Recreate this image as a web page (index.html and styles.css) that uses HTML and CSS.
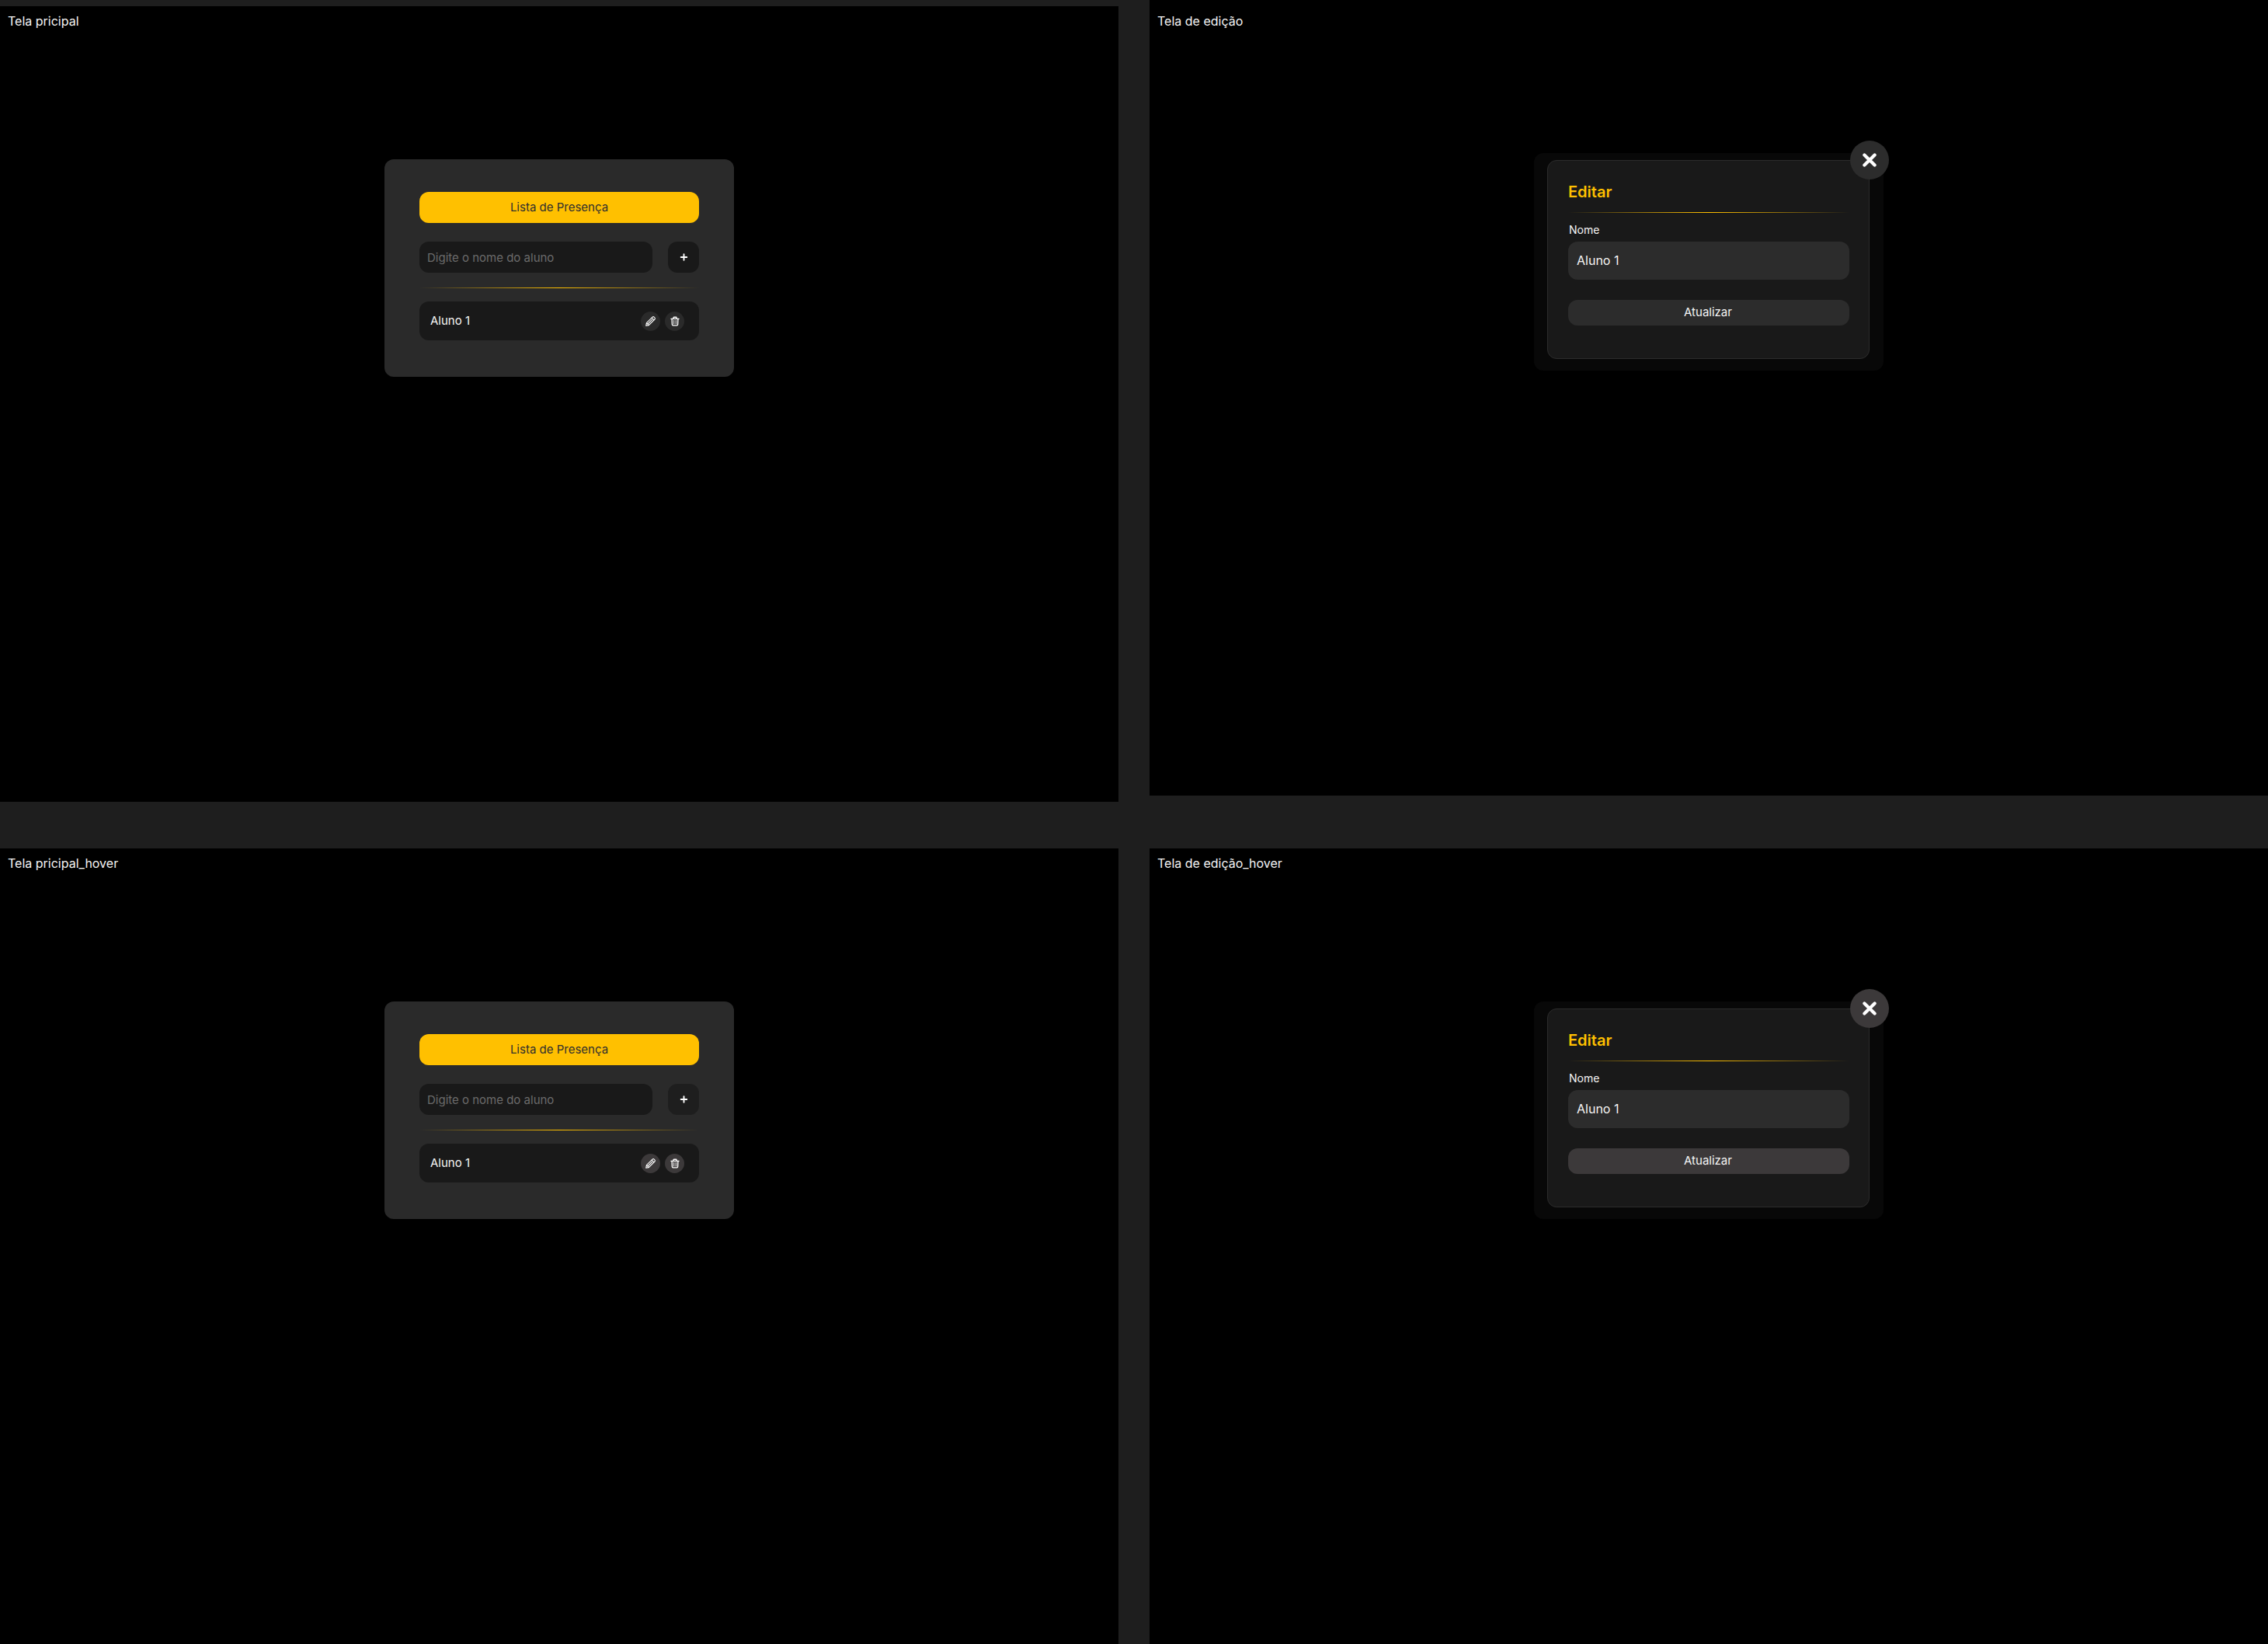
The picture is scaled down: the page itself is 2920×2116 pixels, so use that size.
FILE: index.html
```html
<!DOCTYPE html>
<html lang="pt-BR">
<head>
  <meta charset="utf-8">
  <meta name="viewport" content="width=device-width, initial-scale=1">
  <title>Lista de Presença</title>
  <link rel="stylesheet" href="styles.css">
</head>
<body>
  <svg class="sprite" aria-hidden="true">
    <symbol id="plus" viewBox="0 0 10 10"><path d="M5.5 1.2v7.6M1.7 5h7.6" fill="none" stroke="currentColor" stroke-width="1.9" stroke-linecap="round"/></symbol>
    <symbol id="pencil" viewBox="0 0 13 13"><path d="M.7 12.3l.7-3.6 7.6-7.6a1.5 1.5 0 0 1 2.2 0l.7.7a1.5 1.5 0 0 1 0 2.2l-7.6 7.6zM8.2 2.1l2.7 2.7M3 10l5.8-5.8M1.6 8.9l2.5 2.5" fill="none" stroke="currentColor" stroke-width="1.1" stroke-linejoin="round"/></symbol>
    <symbol id="trash" viewBox="0 0 13 13"><path d="M2 3.4h10M5 3V1.9q0-.6.6-.6h2.8q.6 0 .6.6V3M3.1 3.6l.3 7.2q.1 1.1 1 1.1h5.2q.9 0 1-1.1l.3-7.2" fill="none" stroke="currentColor" stroke-width="1.4" stroke-linecap="round"/><path d="M5.7 4.8v5.6M8.3 4.8v5.6" fill="none" stroke="currentColor" stroke-width="1"/></symbol>
    <symbol id="close" viewBox="0 0 18 18"><path d="M2.4 2.4l13.2 13.2M15.6 2.4L2.4 15.6" fill="none" stroke="currentColor" stroke-width="4.2" stroke-linecap="round"/></symbol>
  </svg>

  <main class="board">
    <div class="column column-main">
      <section class="screen">
        <header class="screen-header"><h2 class="screen-name">Tela pricipal</h2></header>
        <div class="card">
          <h1 class="card-title">Lista de Presença</h1>
          <form class="add-form">
            <input class="add-input" type="text" placeholder="Digite o nome do aluno" aria-label="Nome do aluno">
            <button class="add-button" type="button" aria-label="Adicionar"><svg class="icon-plus"><use href="#plus"/></svg></button>
          </form>
          <hr class="divider">
          <ul class="students">
            <li class="student">
              <span class="student-name">Aluno 1</span>
              <button class="round-button" type="button" aria-label="Editar"><svg class="icon"><use href="#pencil"/></svg></button>
              <button class="round-button" type="button" aria-label="Excluir"><svg class="icon"><use href="#trash"/></svg></button>
            </li>
          </ul>
        </div>
      </section>

      <section class="screen screen-hover">
        <header class="screen-header"><h2 class="screen-name">Tela pricipal_hover</h2></header>
        <div class="card">
          <h1 class="card-title">Lista de Presença</h1>
          <form class="add-form">
            <input class="add-input" type="text" placeholder="Digite o nome do aluno" aria-label="Nome do aluno">
            <button class="add-button" type="button" aria-label="Adicionar"><svg class="icon-plus"><use href="#plus"/></svg></button>
          </form>
          <hr class="divider">
          <ul class="students">
            <li class="student">
              <span class="student-name">Aluno 1</span>
              <button class="round-button" type="button" aria-label="Editar"><svg class="icon"><use href="#pencil"/></svg></button>
              <button class="round-button" type="button" aria-label="Excluir"><svg class="icon"><use href="#trash"/></svg></button>
            </li>
          </ul>
        </div>
      </section>
    </div>

    <div class="column column-edit">
      <section class="screen">
        <header class="screen-header screen-header-low"><h2 class="screen-name">Tela de edição</h2></header>
        <div class="backdrop">
          <form class="modal">
            <button class="close-button" type="button" aria-label="Fechar"><svg class="icon-close"><use href="#close"/></svg></button>
            <h1 class="modal-title">Editar</h1>
            <hr class="modal-divider">
            <label class="modal-label" for="nome">Nome</label>
            <input class="modal-input" id="nome" type="text" value="Aluno 1">
            <button class="update-button" type="button">Atualizar</button>
          </form>
        </div>
      </section>

      <section class="screen screen-hover">
        <header class="screen-header"><h2 class="screen-name">Tela de edição_hover</h2></header>
        <div class="backdrop">
          <form class="modal">
            <button class="close-button" type="button" aria-label="Fechar"><svg class="icon-close"><use href="#close"/></svg></button>
            <h1 class="modal-title">Editar</h1>
            <hr class="modal-divider">
            <label class="modal-label" for="nome-hover">Nome</label>
            <input class="modal-input" id="nome-hover" type="text" value="Aluno 1">
            <button class="update-button" type="button">Atualizar</button>
          </form>
        </div>
      </section>
    </div>
  </main>
</body>
</html>
```

FILE: styles.css
```css
* {
  box-sizing: border-box;
  margin: 0;
  padding: 0;
}

body {
  background: #1e1e1e;
  color: #f5f5f5;
  font-family: Inter, "Liberation Sans", sans-serif;
  font-size: 15px;
  font-weight: 400;
  line-height: 20px;
}

button,
input {
  border: 0;
  color: inherit;
  font: inherit;
}

button {
  cursor: pointer;
}

.sprite {
  display: none;
}

/* Board */
.board {
  display: grid;
  grid-template-columns: 1fr 1fr;
  column-gap: 40px;
}

.column {
  display: flex;
  flex-direction: column;
}

.column-main {
  gap: 60px;
  padding-top: 8px;
}

.column-edit {
  gap: 68px;
}

.screen {
  display: flex;
  flex-direction: column;
  align-items: center;
  aspect-ratio: 1440 / 1024;
  background: #000;
}

.screen-header {
  align-self: stretch;
  height: 197px;
  padding: 9px 10px;
}

.screen-header-low {
  padding-top: 17px;
}

.screen-name {
  font-size: 16px;
  font-weight: 400;
}

/* Attendance list */
.card {
  width: 450px;
  max-width: 100%;
  padding: 42px 45px 47px;
  border-radius: 12px;
  background: #2a2a2a;
}

.card-title {
  padding: 10px;
  border-radius: 12px;
  background: #ffc000;
  color: #2f2f2f;
  font-size: 15px;
  font-weight: 400;
  text-align: center;
}

.add-form {
  display: flex;
  gap: 20px;
  margin-top: 24px;
}

.add-input {
  flex: 1;
  min-width: 0;
  height: 40px;
  padding: 0 10px;
  border-radius: 12px;
  background: #191919;
}

.add-input::placeholder {
  color: #6b6b6b;
  opacity: 1;
}

.add-button {
  display: grid;
  place-items: center;
  width: 40px;
  height: 40px;
  border-radius: 12px;
  background: #191919;
  color: #fff;
}

.icon-plus {
  width: 10px;
  height: 10px;
}

.divider,
.modal-divider {
  height: 1px;
  border: 0;
  background: linear-gradient(90deg, transparent, #ffc000, transparent);
}

.divider {
  margin: 19px 0 17px;
}

.students {
  list-style: none;
}

.student {
  display: flex;
  align-items: center;
  gap: 6px;
  padding: 13px 19px 12px 14px;
  border-radius: 12px;
  background: #191919;
}

.student-name {
  flex: 1;
  padding-bottom: 2px;
}

.round-button {
  display: grid;
  place-items: center;
  width: 25px;
  height: 25px;
  border-radius: 50%;
  background: #2a2a2a;
  color: #fff;
}

.icon {
  width: 13px;
  height: 13px;
}

/* Edit dialog */
.backdrop {
  width: 450px;
  max-width: 100%;
  padding: 9px 18px 15px 17px;
  border-radius: 12px;
  background: #080808;
}

.modal {
  position: relative;
  display: flex;
  flex-direction: column;
  padding: 28px 25px 42px 26px;
  border: 1px solid #2c2c2c;
  border-radius: 12px;
  background: #191919;
}

.close-button {
  position: absolute;
  top: -26px;
  right: -26px;
  display: grid;
  place-items: center;
  width: 50px;
  height: 50px;
  border-radius: 50%;
  background: #2c2c2c;
  color: #fff;
}

.icon-close {
  width: 18px;
  height: 18px;
}

.modal-title {
  color: #ffc000;
  font-size: 20px;
  font-weight: 600;
  line-height: 24px;
}

.modal-divider {
  margin: 14px 0 12px;
}

.modal-label {
  margin-bottom: 5px;
  padding-left: 1px;
  font-size: 14px;
}

.modal-input {
  height: 49px;
  padding: 0 11px 2px;
  border-radius: 12px;
  background: #2c2c2c;
  font-size: 16px;
}

.update-button {
  height: 33px;
  margin-top: 26px;
  padding: 0 2px 2px 0;
  border-radius: 12px;
  background: #2c2c2c;
}

/* Hover states */
.screen-hover .add-button,
.add-button:hover {
  background: #1e1e1e;
}

.screen-hover .round-button,
.screen-hover .close-button,
.screen-hover .update-button,
.round-button:hover,
.close-button:hover,
.update-button:hover {
  background: #3c393a;
}
```
